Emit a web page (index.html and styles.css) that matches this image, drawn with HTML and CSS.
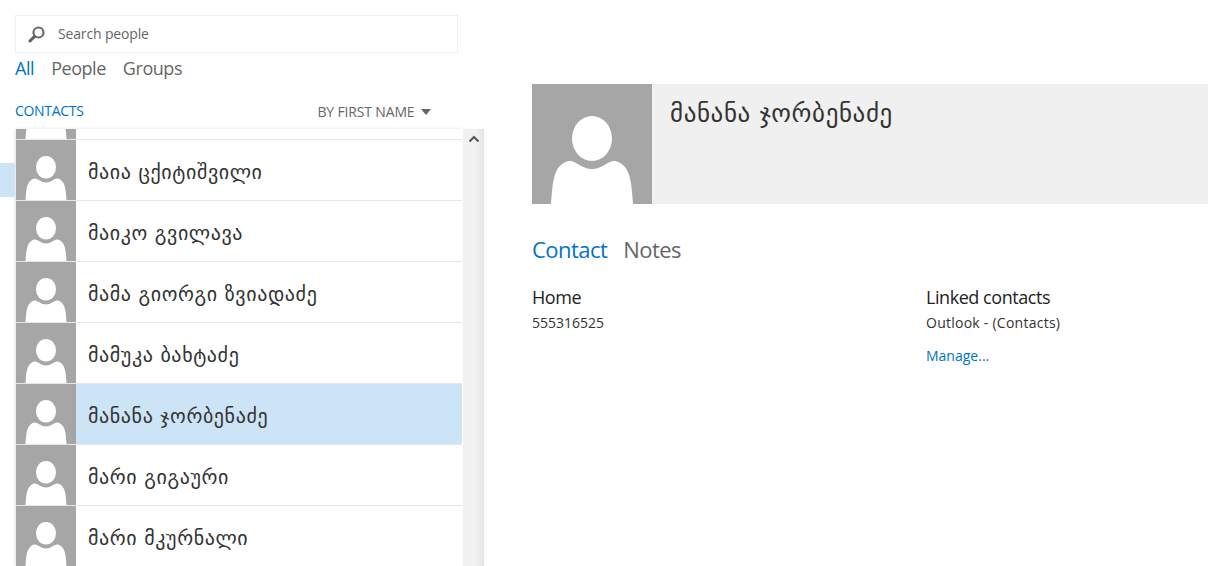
FILE: index.html
```html
<!DOCTYPE html>
<html lang="en">
  <head>
    <meta charset="UTF-8" />
    <meta name="viewport" content="width=device-width, initial-scale=1.0" />
    <title>People</title>
    <link rel="stylesheet" href="styles.css">
  </head>
  <body>
    <svg class="defs" width="0" height="0">
      <symbol id="person" viewBox="0 0 120 120">
        <rect width="120" height="120" fill="#a6a6a6" />
        <ellipse cx="60" cy="54.5" rx="20" ry="22.5" fill="#fff" />
        <path d="M19 120C20 105 21 95 24 88C27 81 33 77 38 77C44 77 50 85 60 85C70 85 76 77 82 77C87 77 93 81 96 88C99 95 100 105 101 120Z" fill="#fff" />
      </symbol>
    </svg>

    <div class="left">
      <div class="search">
        <svg class="search-icon" width="18" height="18" viewBox="0 0 18 18">
          <circle cx="10.5" cy="7.5" r="5" fill="none" stroke="#6b6b6b" stroke-width="2.2" />
          <path d="M6.5 11.5L2 16" stroke="#6a5a50" stroke-width="3" stroke-linecap="round" />
        </svg>
        <span>Search people</span>
      </div>
      <div class="filters">
        <span class="active">All</span>
        <span>People</span>
        <span>Groups</span>
      </div>
      <div class="list-head">
        <span class="contacts">CONTACTS</span>
        <span class="sort">BY FIRST NAME <i class="caret"></i></span>
      </div>
      <div class="list-wrap">
        <span class="side-mark"></span>
        <div class="list">
          <div class="rows">
            <div class="row"><svg class="avatar"><use href="#person" /></svg></div>
            <div class="row"><svg class="avatar"><use href="#person" /></svg><span>მაია ცქიტიშვილი</span></div>
            <div class="row"><svg class="avatar"><use href="#person" /></svg><span>მაიკო გვილავა</span></div>
            <div class="row"><svg class="avatar"><use href="#person" /></svg><span>მამა გიორგი ზვიადაძე</span></div>
            <div class="row"><svg class="avatar"><use href="#person" /></svg><span>მამუკა ბახტაძე</span></div>
            <div class="row selected"><svg class="avatar"><use href="#person" /></svg><span>მანანა ჯორბენაძე</span></div>
            <div class="row"><svg class="avatar"><use href="#person" /></svg><span>მარი გიგაური</span></div>
            <div class="row"><svg class="avatar"><use href="#person" /></svg><span>მარი მკურნალი</span></div>
          </div>
        </div>
        <div class="scrollbar">
          <svg width="12" height="8" viewBox="0 0 12 8">
            <path d="M1.5 6.5L6 2L10.5 6.5" fill="none" stroke="#555" stroke-width="2" />
          </svg>
        </div>
      </div>
    </div>

    <div class="detail">
      <div class="banner">
        <svg class="photo"><use href="#person" /></svg>
        <h1>მანანა ჯორბენაძე</h1>
      </div>
      <div class="tabs">
        <span class="active">Contact</span>
        <span>Notes</span>
      </div>
      <div class="columns">
        <div class="col">
          <h2>Home</h2>
          <p class="phone">555316525</p>
        </div>
        <div class="col linked">
          <h2>Linked contacts</h2>
          <p>Outlook - (Contacts)</p>
          <a class="manage" href="#">Manage...</a>
        </div>
      </div>
    </div>
  </body>
</html>
```

FILE: styles.css
```css
html, body {
  height: 100%;
}

body {
  margin: 0;
  display: flex;
  overflow: hidden;
  background-color: #fff;
  font-family: "Open Sans", "DejaVu Sans", sans-serif;
  color: #333;
}

.defs {
  position: absolute;
}

.left {
  width: 484px;
  flex: none;
  display: flex;
  flex-direction: column;
  padding-top: 15px;
  box-sizing: border-box;
}

.search {
  margin-left: 15px;
  width: 443px;
  height: 38px;
  box-sizing: border-box;
  border: 1px solid #e6f0f9;
  display: flex;
  align-items: center;
  padding: 0 0 2px 12px;
  font-size: 14px;
  letter-spacing: -0.15px;
  color: #666;
}

.search-icon {
  margin-right: 12px;
  margin-top: 2px;
}

.filters {
  margin-left: 15px;
  margin-top: 2px;
  height: 26px;
  display: flex;
  gap: 17px;
  font-size: 18px;
  line-height: 26px;
  letter-spacing: -0.45px;
  color: #666;
}

.active {
  color: #0072c6;
}

.list-head {
  margin-left: 15px;
  margin-top: 17px;
  width: 416px;
  height: 26px;
  display: flex;
  justify-content: space-between;
  font-size: 14px;
  line-height: 26px;
  letter-spacing: -0.3px;
}

.contacts {
  color: #0072c6;
}

.sort {
  color: #666;
  margin-top: 1px;
  letter-spacing: -0.15px;
}

.caret {
  display: inline-block;
  margin-left: 3px;
  border-left: 5.5px solid transparent;
  border-right: 5.5px solid transparent;
  border-top: 6px solid #666;
  vertical-align: 2px;
}

.list-wrap {
  flex: 1;
  min-height: 0;
  margin-top: 5px;
  display: flex;
  padding-left: 16px;
  position: relative;
}

.side-mark {
  position: absolute;
  left: 0;
  top: 34px;
  width: 15px;
  height: 34px;
  background-color: #cde4f7;
}

.list {
  flex: 1;
  overflow: hidden;
  box-shadow: -1px 0 3px rgba(0, 0, 0, 0.12);
}

.rows {
  margin-top: -50px;
  margin-right: 1px;
}

.row {
  height: 60px;
  border-bottom: 1px solid #e6e6e6;
  display: flex;
  align-items: center;
  font-family: "DejaVu Sans", sans-serif;
  font-size: 20px;
  letter-spacing: 0.6px;
  color: #333;
}

.row span {
  margin-left: 12px;
  margin-top: 4px;
}

.selected {
  background-color: #cde4f7;
}

.avatar {
  width: 60px;
  height: 60px;
  flex: none;
}

.scrollbar {
  width: 21px;
  flex: none;
  background: linear-gradient(to right, #f1f1f1 60%, #e4e4e4);
  box-shadow: 1px 0 3px rgba(0, 0, 0, 0.04);
  display: flex;
  justify-content: center;
  padding-top: 6px;
  box-sizing: border-box;
}

.detail {
  flex: 1;
  min-width: 0;
  margin-left: 48px;
  padding-top: 84px;
}

.banner {
  height: 120px;
  display: flex;
  background-color: #f0f0f0;
}

.photo {
  width: 120px;
  height: 120px;
  flex: none;
}

.banner h1 {
  margin: 14px 0 0 18px;
  font-family: "DejaVu Sans", sans-serif;
  font-size: 25px;
  line-height: 32px;
  letter-spacing: 0.6px;
  font-weight: normal;
  color: #333;
}

.tabs {
  margin-top: 30px;
  display: flex;
  gap: 16px;
  font-size: 22px;
  line-height: 30px;
  letter-spacing: -0.55px;
  color: #666;
}

.columns {
  margin-top: 20px;
  display: flex;
}

.col {
  width: 394px;
  flex: none;
}

.linked {
  width: 282px;
}

h2 {
  margin: 0;
  font-size: 18px;
  line-height: 26px;
  font-weight: normal;
  letter-spacing: -0.45px;
  color: #222;
}

p {
  margin: 3px 0 0;
  font-size: 14px;
  line-height: 20px;
  letter-spacing: 0.25px;
  color: #333;
}

.phone {
  letter-spacing: 0;
}

.manage {
  display: block;
  margin-top: 13px;
  font-size: 14px;
  line-height: 20px;
  color: #0072c6;
  text-decoration: none;
}
```
